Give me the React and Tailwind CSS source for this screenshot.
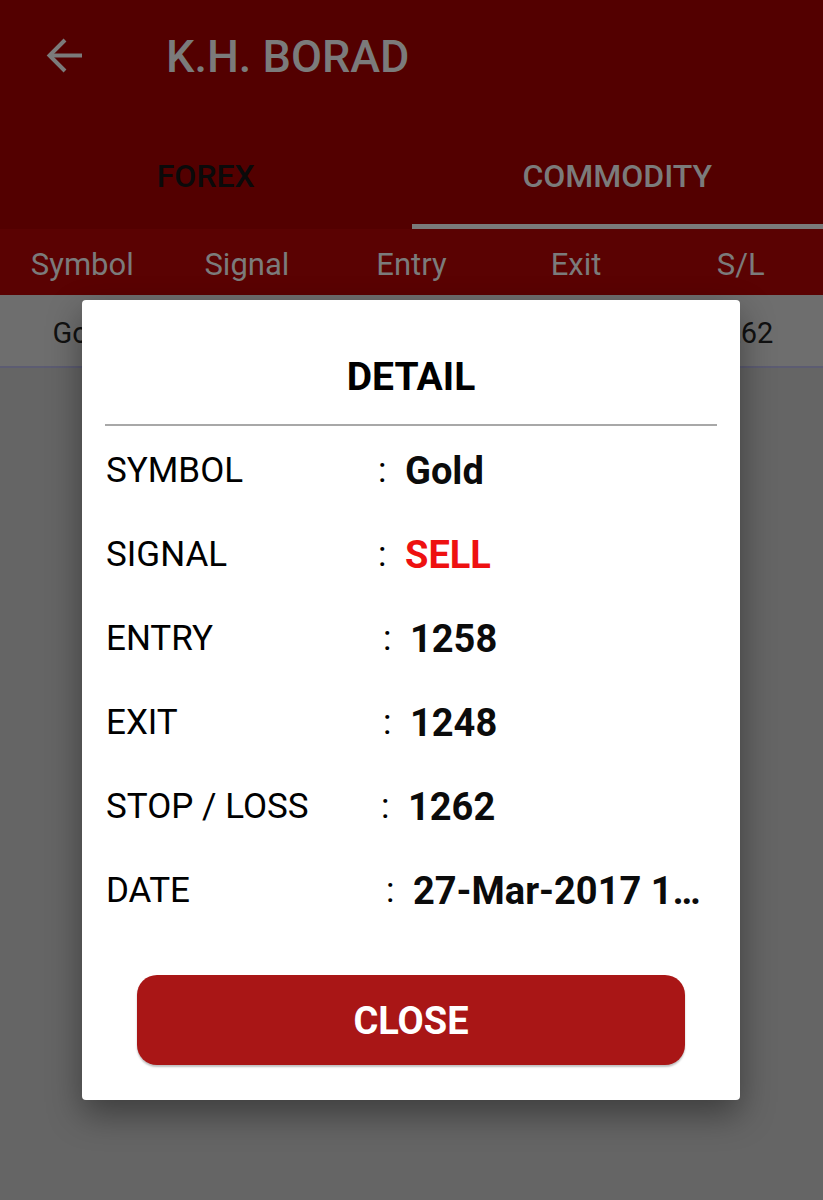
const detail = [
  { label: "SYMBOL", value: "Gold", labelW: "w-[272px]", valueClass: "text-[#0b0b0b]" },
  { label: "SIGNAL", value: "SELL", labelW: "w-[272px]", valueClass: "text-[#ee1111]" },
  { label: "ENTRY", value: "1258", labelW: "w-[277px]", valueClass: "text-[#0b0b0b]" },
  { label: "EXIT", value: "1248", labelW: "w-[277px]", valueClass: "text-[#0b0b0b]" },
  { label: "STOP / LOSS", value: "1262", labelW: "w-[275px]", valueClass: "text-[#0b0b0b]" },
  { label: "DATE", value: "27-Mar-2017 1…", labelW: "w-[280px]", valueClass: "text-[#0b0b0b]" },
];

const columns = ["Symbol", "Signal", "Entry", "Exit", "S/L"];
// middle cells sit behind the dialog
const row = ["Gold", "", "", "", "1262"];

function BackArrow() {
  return (
    <svg width="37" height="37" viewBox="0 0 37 37" fill="none" stroke="#7b7b7b" strokeWidth="4">
      <path d="M3 18.5H36" />
      <path d="M19 3L3.5 18.5L19 34" />
    </svg>
  );
}

export default function App() {
  return (
    <div className="relative h-[1200px] w-full overflow-hidden bg-[#656565] font-['Roboto',sans-serif]">
      {/* app bar */}
      <div className="flex h-[112px] items-center bg-[#530000]">
        <div className="ml-[46px] mt-[-1px] flex">
          <BackArrow />
        </div>
        <h1 className="ml-[83px] text-[45px] font-medium leading-none text-[#7b7b7b]">K.H. BORAD</h1>
      </div>

      {/* tabs */}
      <div className="grid h-[117px] grid-cols-2 bg-[#530000]">
        <div className="flex items-center justify-center pt-[10px] text-[32px] font-medium text-[#0a0a0a]">FOREX</div>
        <div className="flex flex-col">
          <div className="flex flex-1 items-center justify-center pt-[16px] text-[32px] font-medium text-[#7b7b7b]">COMMODITY</div>
          <div className="h-[5px] bg-[#7a7a7a]" />
        </div>
      </div>

      {/* column header */}
      <div className="grid h-[66px] grid-cols-5 items-center bg-[#5a0202] pt-[6px]">
        {columns.map((c) => (
          <div key={c} className="text-center text-[31px] text-[#7b7b7b]">{c}</div>
        ))}
      </div>

      {/* list row */}
      <div className="grid h-[73px] grid-cols-5 items-center border-b-2 border-[#5c5c72] bg-[#6e6e6e] pt-[6px]">
        {row.map((c, i) => (
          <div key={i} className="text-center text-[29px] text-[#111]">{c}</div>
        ))}
      </div>

      {/* dialog */}
      <div className="absolute left-[82px] top-[300px] flex h-[800px] w-[658px] flex-col rounded-[4px] bg-white shadow-[0_14px_34px_rgba(0,0,0,0.4)]">
        <div className="flex h-[124px] items-center justify-center pt-[30px] text-[39px] font-bold text-black">DETAIL</div>
        <div className="mx-[23px] h-[2px] bg-[#a8a8a8]" />
        <div className="flex flex-col pl-[24px] pr-[35px] pt-[3px]">
          {detail.map((d) => (
            <div key={d.label} className="flex h-[84px] items-center text-black">
              <div className={`${d.labelW} shrink-0 text-[35px]`}>{d.label}</div>
              <div className="w-[27px] shrink-0 text-[35px]">:</div>
              <div className={`min-w-0 flex-1 truncate text-[38px] font-bold ${d.valueClass}`}>{d.value}</div>
            </div>
          ))}
        </div>
        <div className="mt-auto px-[55px] pb-[35px]">
          <button className="flex h-[90px] w-full items-center justify-center rounded-[20px] bg-[#a91616] pt-[2px] text-[38px] font-bold text-white shadow-[0_2px_2px_rgba(0,0,0,0.25)]">
            CLOSE
          </button>
        </div>
      </div>
    </div>
  );
}
